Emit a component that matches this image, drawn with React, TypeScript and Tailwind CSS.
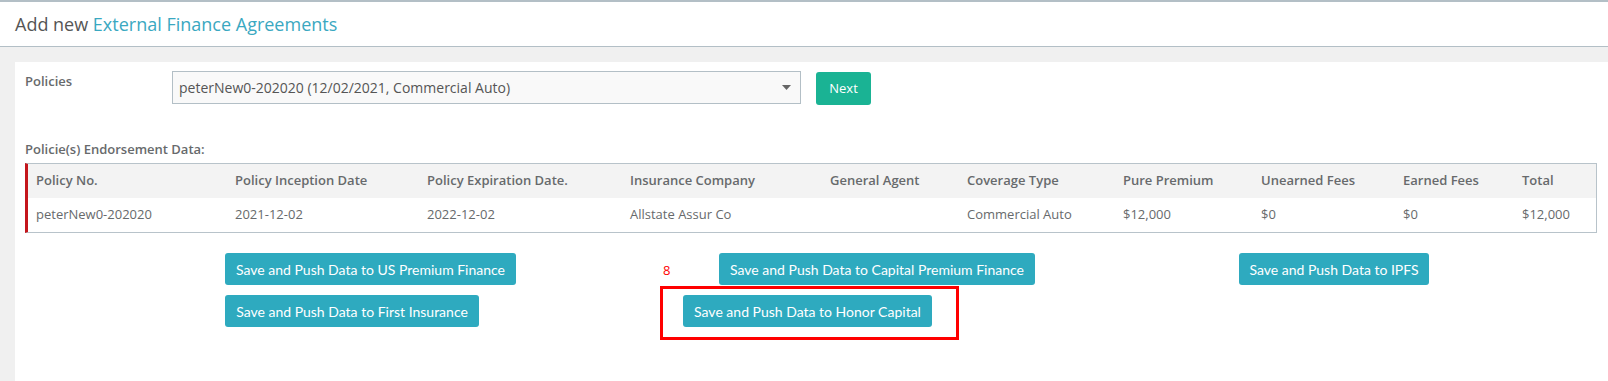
const columns = [
  'Policy No.',
  'Policy Inception Date',
  'Policy Expiration Date.',
  'Insurance Company',
  'General Agent',
  'Coverage Type',
  'Pure Premium',
  'Unearned Fees',
  'Earned Fees',
  'Total',
]

const row = [
  'peterNew0-202020',
  '2021-12-02',
  '2022-12-02',
  'Allstate Assur Co',
  '',
  'Commercial Auto',
  '$12,000',
  '$0',
  '$0',
  '$12,000',
]

function PushButton({ label, width }: { label: string; width: string }) {
  return (
    <button
      className={`h-[32px] ${width} shrink-0 rounded-[3px] bg-[#2eaabf] text-center text-[14px] text-white font-['Lato',sans-serif]`}
    >
      {label}
    </button>
  )
}

export default function App() {
  return (
    <div className="min-h-[381px] bg-[#f0f0f0] font-['Open_Sans',sans-serif] text-[#676a6c]">
      {/* header */}
      <div className="flex h-[47px] items-center border-t-2 border-b border-[#b3bfc6] bg-white pl-[15px]">
        <h2 className="text-[18px] leading-[24px] text-[#555]">
          Add new <span className="text-[#3aa8c1]">External Finance Agreements</span>
        </h2>
      </div>

      <div className="pt-[15px] pl-[15px]">
        <div className="min-h-[319px] bg-white pl-[10px] pr-[11px] pt-[9px]">
          {/* policy select */}
          <div className="flex items-start">
            <label className="mt-[1px] w-[147px] shrink-0 text-[13px] font-semibold leading-[18px] text-[#676a6c]">
              Policies
            </label>
            <div className="flex h-[33px] w-[629px] items-center justify-between border border-[#b3bfc6] bg-[#f9f9f9] pl-[6px] pr-[9px] text-[14px] text-[#555]">
              <span>peterNew0-202020 (12/02/2021, Commercial Auto)</span>
              <svg width="9" height="5" viewBox="0 0 9 5">
                <path d="M0 0h9L4.5 5z" fill="#666" />
              </svg>
            </div>
            <button className="ml-[15px] mt-[1px] h-[33px] w-[55px] rounded-[3px] bg-[#1ab394] text-[13px] text-white">
              Next
            </button>
          </div>

          {/* endorsement data */}
          <p className="mt-[35px] text-[13px] font-semibold leading-[18px] text-[#676a6c]">
            Policie(s) Endorsement Data:
          </p>
          <div className="mt-[5px] border-l-[3px] border-l-[#c4161c] border-y border-r border-[#b8c3ca] text-[13px] text-[#676a6c]">
            <div className="grid h-[34px] grid-cols-[199px_192px_203px_200px_137px_156px_138px_142px_119px_1fr] items-center bg-[#f3f3f3] font-semibold">
              {columns.map((c) => (
                <div key={c} className="pl-[8px] whitespace-nowrap">
                  {c}
                </div>
              ))}
            </div>
            <div className="grid h-[34px] grid-cols-[199px_192px_203px_200px_137px_156px_138px_142px_119px_1fr] items-center bg-white">
              {row.map((v, i) => (
                <div key={i} className="pl-[8px] whitespace-nowrap">
                  {v}
                </div>
              ))}
            </div>
          </div>

          {/* push buttons */}
          <div className="mt-[20px] flex">
            <div className="ml-[200px]">
              <PushButton label="Save and Push Data to US Premium Finance" width="w-[291px]" />
            </div>
            <div className="ml-[203px]">
              <PushButton label="Save and Push Data to Capital Premium Finance" width="w-[316px]" />
            </div>
            <div className="ml-[204px]">
              <PushButton label="Save and Push Data to IPFS" width="w-[190px]" />
            </div>
          </div>
          <div className="mt-[10px] flex">
            <div className="ml-[200px]">
              <PushButton label="Save and Push Data to First Insurance" width="w-[254px]" />
            </div>
            <div className="relative ml-[204px]">
              <PushButton label="Save and Push Data to Honor Capital" width="w-[249px]" />
              <div className="pointer-events-none absolute -left-[23px] -top-[9px] -right-[27px] -bottom-[13px] border-[3px] border-[#ff0000]" />
              <span className="absolute -left-[20px] -top-[34px] text-[13px] leading-[18px] text-[#ff0000]">8</span>
            </div>
          </div>
        </div>
      </div>
    </div>
  )
}
